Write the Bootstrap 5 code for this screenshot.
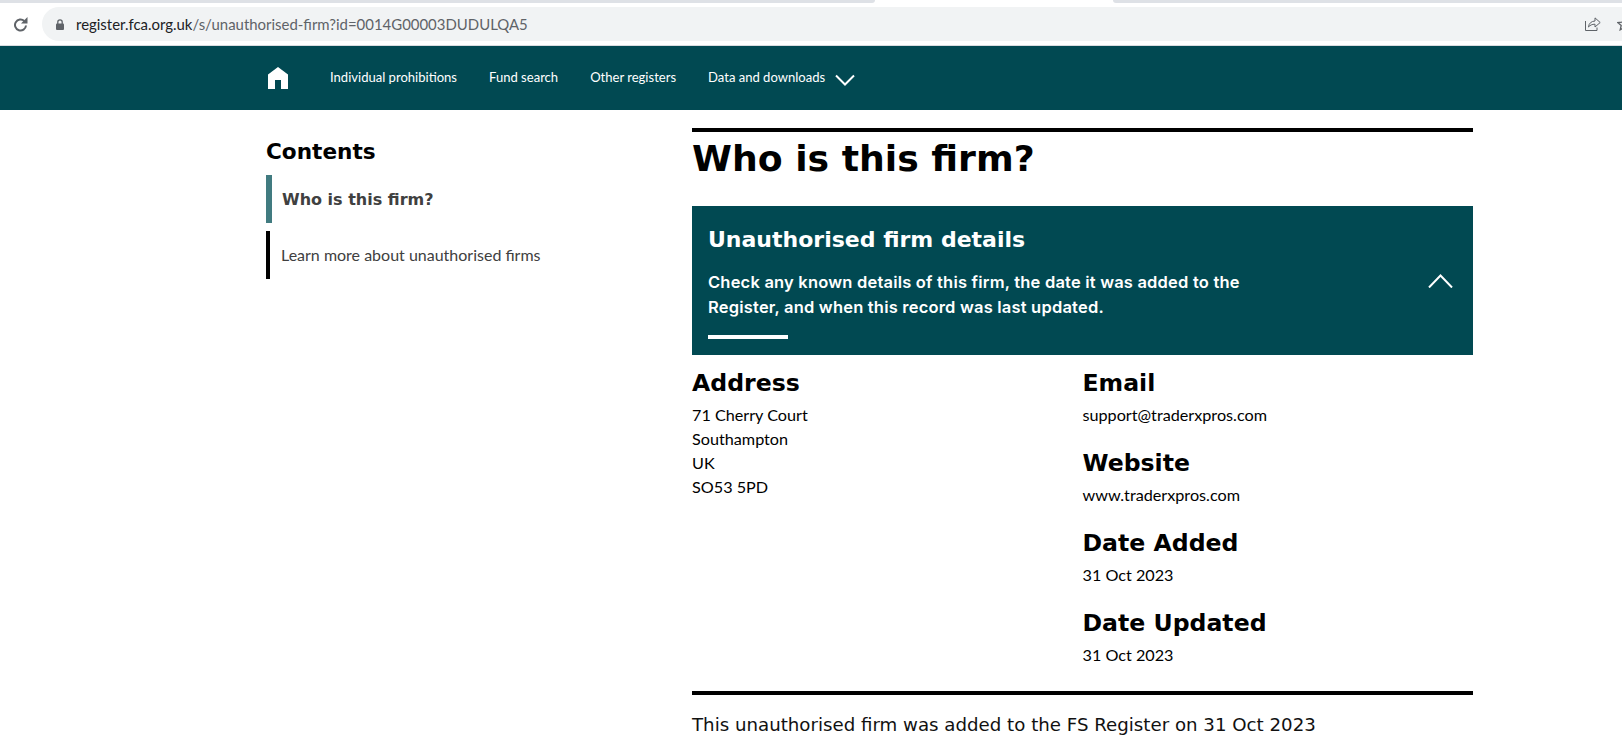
<!DOCTYPE html>
<html lang="en">
<head>
<meta charset="utf-8">
<title>Who is this firm?</title>
<link href="https://cdn.jsdelivr.net/npm/bootstrap@5.3.0/dist/css/bootstrap.min.css" rel="stylesheet">
<style>
html,body{height:748px;overflow:hidden;background:#fff}
body{font-family:"Lato","Liberation Sans",sans-serif;color:#000;font-size:15px}
.tabstrip{height:3px}
.tab-side{background:#dee1e6;height:3px}
.tab-side.lft{width:875px;border-bottom-right-radius:3px}
.tab-side.rgt{margin-left:238px;flex:1;border-bottom-left-radius:3px}
.chrome-bar{height:43px;padding:4px 0;border-bottom:1px solid #dadce0;background:#fff}
.reload{width:40px;margin-right:2px}
.url-pill{height:34px;background:#f1f3f4;border-radius:17px 0 0 17px;padding-left:14px;font-size:14.95px;color:#5f6368;overflow:hidden}
.lock-ico{margin-right:12px}
.url-host{color:#202124}
.url-tools{margin-right:-9px}
.site-nav{height:64px;background:#014952;padding-left:268px}
.site-nav a{color:#fff;text-decoration:none;font-size:13.05px}
.home-link{width:20px;margin-right:42px}
.nav-gap{gap:32px}
.nav-chev{margin-left:10px;margin-top:4px}
.page-wrap{padding-left:266px;width:1473px}
.side-col{width:426px;padding-top:29px}
.main-col{width:781px;padding-top:18px}
.side-title{font-family:"DejaVu Sans",sans-serif;font-weight:700;font-size:21.6px;line-height:26px;margin:0 0 10px}
.side-item{height:48px;padding-left:12px;margin-bottom:8px;color:#404040;border-left:4px solid #000}
.side-item.is-on{border-left:6px solid #417b80;padding-left:10px;padding-top:1px;font-family:"DejaVu Sans",sans-serif;font-weight:700;font-size:16px}
.side-item.is-off{font-size:16px;padding-left:11px}
.rule-top{height:4px;background:#000}
.page-title{font-family:"DejaVu Sans",sans-serif;font-weight:700;font-size:36.2px;line-height:46px;margin:4px 0 24px}
.banner{height:149px;background:#014952;color:#fff;padding:21px 16px 0}
.banner-title{font-family:"DejaVu Sans",sans-serif;font-weight:700;font-size:22px;line-height:26px;margin:0 0 17px}
.banner-text{font-family:"Inter","Open Sans",sans-serif;font-weight:600;font-size:16.5px;letter-spacing:.2px;line-height:25px;width:545px;margin:0}
.banner-bar{width:80px;height:4px;background:#fff;margin-top:15px}
.chev-up{position:absolute;right:20px;top:68px}
.banner-wrap{position:relative}
.detail-head{font-family:"DejaVu Sans",sans-serif;font-weight:700;font-size:23.6px;line-height:30px;margin:0 0 5px}
.detail-text{font-size:16.2px;line-height:24px;margin:0 0 21px}
.details{padding-top:13px}
.detail-col{width:391px}
.rule-bottom{height:4px;background:#000;margin-top:3px}
.foot-line{font-family:"DejaVu Sans",sans-serif;font-size:18.2px;margin:18px 0 0;line-height:24px;color:#111}
</style>
</head>
<body>
<div class="tabstrip d-flex"><div class="tab-side lft"></div><div class="tab-side rgt"></div></div>
<div class="chrome-bar d-flex">
  <div class="reload d-flex align-items-center justify-content-center">
    <svg width="15" height="15" viewBox="0 0 15 15" fill="none" stroke="#5f6368" stroke-width="2"><path d="M13 8.500a5.500 5.500 0 1 1-1.700-4.500"/><path d="M14.500 0v6.500H8z" fill="#5f6368" stroke="none"/></svg>
  </div>
  <div class="url-pill flex-grow-1 d-flex align-items-center">
    <svg class="lock-ico" width="8" height="11" viewBox="0 0 8 11"><path d="M1.800 5V3a2.200 2.200 0 0 1 4.400 0V5" fill="none" stroke="#5f6368" stroke-width="1.300"/><rect x="0" y="4.500" width="8" height="6.500" rx="1" fill="#5f6368"/></svg>
    <span><span class="url-host">register.fca.org.uk</span>/s/unauthorised-firm?id=0014G00003DUDULQA5</span>
    <span class="url-tools ms-auto d-flex align-items-center gap-3">
      <svg width="16" height="14" viewBox="0 0 16 14" fill="none" stroke="#5f6368" stroke-width="1"><path d="M.5 4v9.500h11.500v-3"/><path d="M3.500 10c.3-3.800 3-5.800 6.500-6V.9L15.200 5.500 10 10V7.200c-3 0-5 1-6.500 2.800z"/></svg>
      <svg width="14" height="14" viewBox="0 0 14 14" fill="none" stroke="#5f6368" stroke-width="1.300"><path d="M7 1.200l1.800 4 4.300.4-3.300 2.900 1 4.300L7 10.500l-3.800 2.300 1-4.300L.9 5.600l4.300-.4z"/></svg>
    </span>
  </div>
</div>
<nav class="site-nav d-flex align-items-center">
  <a class="home-link d-flex" href="#" aria-label="Home">
    <svg width="20" height="22" viewBox="0 0 20 22" fill="#fff"><path d="M10 0 20 7.500V22H13V13H7V22H0V7.500z"/></svg>
  </a>
  <div class="d-flex align-items-center nav-gap">
    <a href="#">Individual prohibitions</a>
    <a href="#">Fund search</a>
    <a href="#">Other registers</a>
    <a href="#" class="d-flex align-items-center">Data and downloads
      <svg class="nav-chev" width="20" height="12" viewBox="0 0 20 12" fill="none" stroke="#fff" stroke-width="2"><path d="M1 1.500 10 10.500 19 1.500"/></svg>
    </a>
  </div>
</nav>
<div class="page-wrap d-flex">
  <aside class="side-col">
    <h2 class="side-title">Contents</h2>
    <div class="side-item is-on d-flex align-items-center">Who is this firm?</div>
    <div class="side-item is-off d-flex align-items-center">Learn more about unauthorised firms</div>
  </aside>
  <main class="main-col">
    <div class="rule-top"></div>
    <h1 class="page-title">Who is this firm?</h1>
    <section class="banner banner-wrap">
      <h2 class="banner-title">Unauthorised firm details</h2>
      <p class="banner-text">Check any known details of this firm, the date it was added to the Register, and when this record was last updated.</p>
      <div class="banner-bar"></div>
      <svg class="chev-up" width="25" height="14" viewBox="0 0 25 14" fill="none" stroke="#fff" stroke-width="2"><path d="M1 13.500 12.500 1.500 24 13.500"/></svg>
    </section>
    <div class="details d-flex">
      <div class="detail-col">
        <h3 class="detail-head">Address</h3>
        <p class="detail-text">71 Cherry Court<br>Southampton<br>UK<br>SO53 5PD</p>
      </div>
      <div class="detail-col">
        <h3 class="detail-head">Email</h3>
        <p class="detail-text">support@traderxpros.com</p>
        <h3 class="detail-head">Website</h3>
        <p class="detail-text">www.traderxpros.com</p>
        <h3 class="detail-head">Date Added</h3>
        <p class="detail-text">31 Oct 2023</p>
        <h3 class="detail-head">Date Updated</h3>
        <p class="detail-text">31 Oct 2023</p>
      </div>
    </div>
    <div class="rule-bottom"></div>
    <p class="foot-line">This unauthorised firm was added to the FS Register on 31 Oct 2023</p>
  </main>
</div>
<script src="https://cdn.jsdelivr.net/npm/bootstrap@5.3.0/dist/js/bootstrap.bundle.min.js"></script>
</body>
</html>
